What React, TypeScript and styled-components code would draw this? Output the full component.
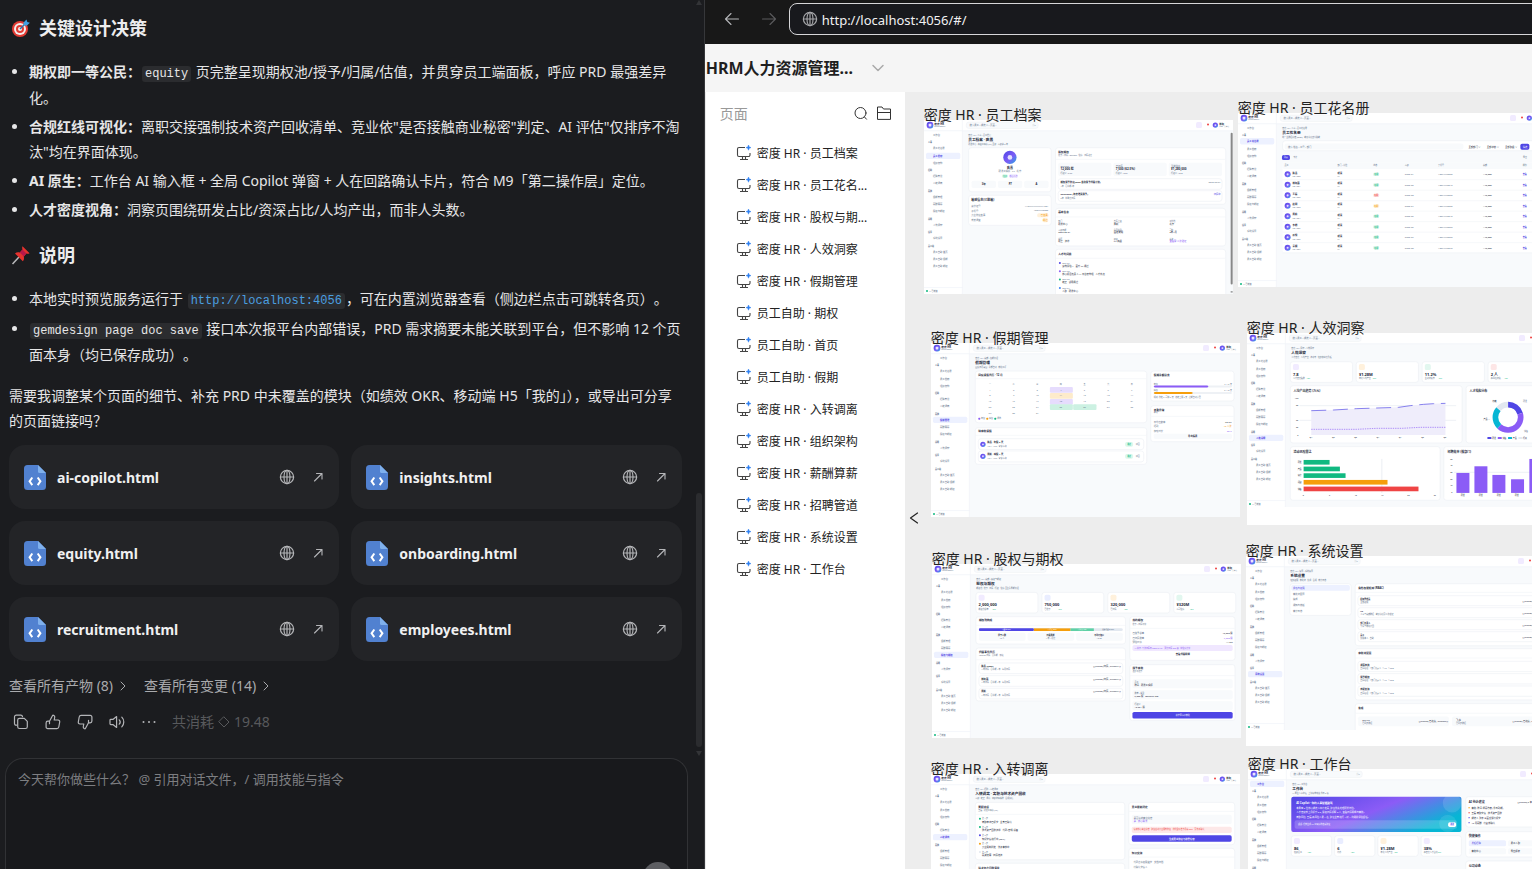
import React from "react";
import styled, { createGlobalStyle } from "styled-components";

const sans = `"Noto Sans", "Noto Sans CJK SC", sans-serif`;
const mono = `"Liberation Mono", "Noto Sans CJK SC", monospace`;

const GlobalStyle = createGlobalStyle`
  *, *::before, *::after { box-sizing: border-box; }
  body { margin: 0; overflow: hidden; background: #1b1c1f; font-family: ${sans}; }
  button, textarea, input { font-family: inherit; margin: 0; }
`;

/* ---------- page frame ---------- */

const Workspace = styled.div`
  display: grid;
  grid-template-columns: 46% minmax(0, 1fr);
  height: 100vh;
  overflow: hidden;
`;

const ChatPanel = styled.section`
  position: relative;
  display: flex;
  flex-direction: column;
  min-width: 0;
  min-height: 0;
  background: #1b1c1f;
  border-right: 1px solid #36373a;
  color: #e6e6e7;
  font-size: 14px;
  line-height: 25px;
`;

const Conversation = styled.div`
  flex: 1;
  min-height: 0;
  overflow: hidden;
  padding: 11px 22px 0 9px;
`;

const SectionTitle = styled.h3`
  display: flex;
  align-items: center;
  gap: 8px;
  margin: 0;
  padding: 3px 0 0 2px;
  font-size: 18px;
  line-height: 28px;
  font-weight: 700;
  color: #ededee;
`;

const Bullets = styled.ul`
  display: flex;
  flex-direction: column;
  gap: 4px;
  margin: 17px 0 16px;
  padding: 0 0 0 20px;
  text-spacing-trim: space-all;
  li::marker { font-size: 14px; }
`;

const Code = styled.code`
  margin: 0 1px;
  padding: 1px 3px;
  border-radius: 3px;
  background: #2b2c2f;
  font-family: ${mono};
  font-size: 12px;
  line-height: 21px;
`;

const CodeLink = styled.a`
  color: #4a9fe0;
  text-decoration: none;
`;

const Paragraph = styled.p`
  margin: 0 0 12px;
`;

const FileGrid = styled.div`
  display: grid;
  grid-template-columns: repeat(2, minmax(0, 1fr));
  gap: 12px;
`;

const FileCard = styled.div`
  display: flex;
  align-items: center;
  height: 64px;
  padding: 0 12px 0 15px;
  border-radius: 16px;
  background: #232427;
`;

const FileName = styled.span`
  flex: 1;
  margin-left: 11px;
  font-size: 14px;
  font-weight: 700;
  color: #f0f0f1;
`;

const IconButton = styled.button<{ $tone?: string }>`
  display: flex;
  align-items: center;
  justify-content: center;
  width: 18px;
  height: 18px;
  padding: 0;
  border: 0;
  background: none;
  color: ${(p) => p.$tone ?? "#b4b5b8"};
  cursor: pointer;
`;

const CardActions = styled.div`
  display: flex;
  gap: 13px;
`;

const LinkRow = styled.div`
  display: flex;
  gap: 15px;
  margin-top: 12px;
`;

const MoreButton = styled.button`
  display: flex;
  align-items: center;
  gap: 4px;
  padding: 0;
  border: 0;
  background: none;
  color: #a9aaad;
  font-size: 14px;
  line-height: 25px;
  cursor: pointer;
`;

const FeedbackRow = styled.div`
  display: flex;
  align-items: center;
  gap: 14px;
  margin-top: 11px;
  padding-left: 3px;
`;

const Cost = styled.span`
  display: flex;
  align-items: center;
  gap: 4px;
  color: #58595c;
`;

const Composer = styled.form`
  display: flex;
  flex-direction: column;
  flex: 0 0 111px;
  margin: 0 16px 0 5px;
  overflow: hidden;
  border: 1px solid #313235;
  border-bottom: 0;
  border-radius: 18px 18px 0 0;
  background: #18191c;
`;

const Prompt = styled.textarea`
  flex: 0 0 103px;
  padding: 10px 12px;
  border: 0;
  outline: 0;
  resize: none;
  background: none;
  color: #e6e6e7;
  font-size: 13px;
  line-height: 20px;
  &::placeholder { color: #7d7e81; opacity: 1; }
`;

const SendButton = styled.button`
  flex: 0 0 30px;
  align-self: flex-end;
  width: 30px;
  margin-right: 14px;
  border: 0;
  border-radius: 15px;
  background: #5d5e62;
`;

const ScrollRail = styled.div`
  position: absolute;
  right: 2px;
  top: 0;
  bottom: 111px;
  display: flex;
  flex-direction: column;
  align-items: center;
  padding-bottom: 2px;
  color: #333437;
`;

const ScrollThumb = styled.div`
  width: 6px;
  height: 254px;
  margin-top: auto;
  margin-bottom: 4px;
  border-radius: 3px;
  background: #2b2c2f;
`;

/* ---------- browser side ---------- */

const Browser = styled.section`
  display: flex;
  flex-direction: column;
  min-width: 0;
  min-height: 0;
  background: #f5f5f5;
  overflow: hidden;
`;

const AddressBar = styled.div`
  display: flex;
  align-items: center;
  flex: 0 0 44px;
  gap: 19px;
  padding: 0 0 6px 18px;
  background: #181818;
`;

const AddressBox = styled.label`
  display: flex;
  flex: 1;
  align-items: center;
  gap: 4px;
  height: 32px;
  margin: 0 -12px 0 -8px;
  padding-left: 12px;
  border: 1px solid #d6d6d8;
  border-radius: 8px;
  background: #18191d;
  color: #a5a6a9;
`;

const AddressInput = styled.input`
  flex: 1;
  min-width: 0;
  padding: 1px 0 0;
  border: 0;
  outline: 0;
  background: none;
  color: #f1f1f2;
  font-size: 13px;
  line-height: 20px;
`;

const ProjectBar = styled.header`
  display: flex;
  align-items: center;
  gap: 16px;
  flex: 0 0 48px;
  padding-left: 1px;
  color: #1f1f1f;
`;

const ProjectName = styled.h1`
  margin: 0;
  font-size: 16px;
  line-height: 24px;
  font-weight: 700;
`;

const Designer = styled.div`
  display: flex;
  flex: 1;
  min-height: 0;
`;

const PageList = styled.nav`
  flex: 0 0 200px;
  border-left: 1px solid #e9e9e9;
  background: #fff;
`;

const PageListHead = styled.div`
  display: flex;
  align-items: center;
  gap: 5px;
  height: 45px;
  padding: 0 12px 4px 14px;
  color: #999;
  font-size: 14px;
  span { flex: 1; }
`;

const PageLink = styled.a`
  display: flex;
  align-items: center;
  gap: 5px;
  height: 32px;
  padding-left: 30px;
  color: #222;
  font-size: 12px;
  text-decoration: none;
  white-space: nowrap;
`;

const Canvas = styled.main`
  position: relative;
  flex: 1;
  min-width: 0;
  overflow: hidden;
  background: #ededed;
`;

const SharedPaints = styled.svg`
  position: absolute;
  width: 0;
  height: 0;
`;

const CollapseButton = styled.button`
  position: absolute;
  left: 3px;
  top: 417px;
  display: flex;
  padding: 3px 0;
  border: 0;
  background: none;
  color: #222;
`;

const Artboard = styled.figure<{ $x: number; $y: number; $h: number }>`
  position: absolute;
  left: ${(p) => p.$x}px;
  top: ${(p) => p.$y}px;
  width: 309px;
  height: ${(p) => p.$h}px;
  margin: 0;
  background: #fff;
  svg { display: block; width: 309px; height: 174px; }
`;

const ArtboardTitle = styled.figcaption`
  position: absolute;
  left: 0;
  bottom: 100%;
  margin-bottom: -5px;
  color: #222;
  font-size: 14px;
  line-height: 20px;
  white-space: nowrap;
`;

/* ---------- icons ---------- */

type IconProps = { size?: number; children: React.ReactNode; box?: number; w?: number };
const Line = ({ size = 16, box = 16, w = 1, children }: IconProps) => (
  <svg width={size} height={size} viewBox={`0 0 ${box} ${box}`} fill="none" stroke="currentColor"
    strokeWidth={w} strokeLinecap="round" strokeLinejoin="round" aria-hidden="true">{children}</svg>
);

const Globe = ({ size = 16 }: { size?: number }) => (
  <Line size={size} w={1.2}>
    <circle cx="8" cy="8" r="6.6" /><ellipse cx="8" cy="8" rx="3" ry="6.6" />
    <path d="M1.4 8h13.2M8 1.4v13.2" />
  </Line>
);
const OpenArrow = () => <Line w={1.1}><path d="M4.500 12 12 4.500M6.500 4.500H12V10" /></Line>;
const Chevron = () => <Line size={12} box={12}><path d="m4 2 4 4-4 4" /></Line>;
const Copy = () => (
  <Line w={1.2}><path d="M3.500 11.200h-.4a1.600 1.600 0 0 1-1.600-1.600V3A1.800 1.800 0 0 1 3.300 1.200h4.500a1.800 1.800 0 0 1 1.700 1.500" />
    <path d="M6.500 4.300h4.800l3 3v5.400a1.800 1.800 0 0 1-1.800 1.800h-6a1.800 1.800 0 0 1-1.800-1.800V6.100a1.800 1.800 0 0 1 1.800-1.800z" /></Line>
);
const thumb = "M4.500 7.200 7.600 1.500c.3-.5 2.500-.1 2.100 2L9.200 6h3.900c1.100 0 1.800.9 1.600 2l-.9 5c-.2 1-.9 1.600-1.900 1.600H2.800c-1 0-1.700-.7-1.700-1.700V8.900c0-1 .7-1.700 1.700-1.700zM4.500 7.200v2.500";
const ThumbUp = () => <Line w={1.2}><path d={thumb} /></Line>;
const ThumbDown = () => <Line w={1.2}><g transform="rotate(180 8 8)"><path d={thumb} /></g></Line>;
const Speaker = () => (
  <Line w={1.2}><path d="M1 6.200a.8.800 0 0 1 .8-.8h2.100L7.600 2.600v10.800L3.900 10.600H1.800a.8.800 0 0 1-.8-.8zM10.200 5.800a3.200 3.200 0 0 1 0 4.400M12.800 3.200a6.800 6.800 0 0 1 0 9.600" /></Line>
);
const Dots = () => (
  <Line><g fill="currentColor" stroke="none"><circle cx="2.500" cy="8" r="1" /><circle cx="8" cy="8" r="1" /><circle cx="13.500" cy="8" r="1" /></g></Line>
);
const FileIcon = () => (
  <svg width="22" height="25" viewBox="0 0 22 25" aria-hidden="true">
    <path d="M3.500 0H14l8 8v13.500a3.500 3.500 0 0 1-3.500 3.500h-15A3.500 3.500 0 0 1 0 21.500v-18A3.500 3.500 0 0 1 3.500 0z" fill="#5181d0" />
    <path d="M14 0l8 8h-6.500A1.500 1.500 0 0 1 14 6.500z" fill="#7fb0ec" />
    <path d="M8.300 12.500 5.600 16.300l2.700 3.800M13.700 12.500l2.700 3.800-2.700 3.800" fill="none" stroke="#fff" strokeWidth="2" />
  </svg>
);
const Target = () => (
  <svg width="20" height="20" viewBox="0 0 20 20" aria-hidden="true">
    <circle cx="9" cy="11" r="8" fill="#e33b33" /><circle cx="9" cy="11" r="6" fill="#f4eeee" />
    <circle cx="9" cy="11" r="4" fill="#e33b33" /><circle cx="9" cy="11" r="2" fill="#f4eeee" />
    <path d="M9 11l5-5" stroke="#2c6fa5" strokeWidth="1.500" />
    <path d="M12.500 7.500V4.500L15.500 1.500l.8 2.400 2.600.8-3 2.900z" fill="#3f9fe0" />
  </svg>
);
const Pin = () => (
  <svg width="20" height="20" viewBox="0 0 20 20" aria-hidden="true">
    <path d="M1.500 19 8 12" stroke="#b9b9bb" strokeWidth="1.500" />
    <path d="M11.500 1.200 18.600 8.200c-1.200.8-2.300.7-3.200.3l-2.600 3c.5 2 .2 3.600-1 4.800L4 8.500c1.300-1.200 2.900-1.500 4.800-1L11.500 4.400c-.5-1-.5-2.200 0-3.200z" fill="#e5322e" />
    <path d="M8.800 7.500 11.500 4.400l3.900 4.100-2.600 3z" fill="#b8184a" />
  </svg>
);
const PageIcon = () => (
  <svg width="16" height="16" viewBox="0 0 16 16" fill="none" aria-hidden="true">
    <path d="M9 2.500H3A1.500 1.500 0 0 0 1.500 4v6A1.500 1.500 0 0 0 3 11.500h9.500A1.500 1.500 0 0 0 14 10V8M6.500 11.500v3M9.500 11.500v3M4 14.500h8" stroke="#444" strokeWidth="1.100" />
    <path d="M12.500 0l.7 1.900 1.800.7-1.800.7-.7 1.900-.7-1.900-1.800-.7 1.800-.7z" fill="#2d7ff0" stroke="#2d7ff0" strokeWidth=".5" />
  </svg>
);

/* ---------- miniature pages shown on the artboards ---------- */

const INK = "#1e293b";
const GREY = "#64748b";
const BLUE = "#4f46e5";
const VIOLET = "#8b5cf6";
const GREEN = "#10b981";
const AMBER = "#f59e0b";
const RED = "#ef4444";

type TProps = { x: number; y: number; s?: number; c?: string; b?: boolean; end?: boolean; mid?: boolean; children: React.ReactNode };
const T = ({ x, y, s = 7, c = GREY, b, end, mid, children }: TProps) => (
  <text x={x} y={y + s * 0.36} fontSize={s} fill={c} fontWeight={b ? 700 : 400}
    textAnchor={end ? "end" : mid ? "middle" : "start"}>{children}</text>
);
type RProps = { x: number; y: number; w: number; h: number; f?: string; r?: number };
const Card = ({ x, y, w, h }: RProps) => <rect x={x} y={y} width={w} height={h} rx="8" fill="#fff" stroke="#edf0f5" strokeWidth="2" />;
const Box = ({ x, y, w, h, f = "#f8fafc", r = 5 }: RProps) => <rect x={x} y={y} width={w} height={h} rx={r} fill={f} />;
const Avatar = ({ x, y, r }: { x: number; y: number; r: number }) => (
  <g><circle cx={x} cy={y} r={r} fill="url(#brand)" /><circle cx={x} cy={y} r={r * 0.35} fill="#fff" opacity=".8" /></g>
);
const Rule = ({ x, y, w }: { x: number; y: number; w: number }) => <path d={`M${x} ${y}h${w}`} stroke="#f1f4f8" strokeWidth="2" />;

const menu: [string, number, boolean][] = [
  ["工作台", 45, true], ["人事", 67, false], ["员工花名册", 85, true], ["员工档案", 108, true], ["组织架构", 129, true],
  ["招聘", 150, false], ["招聘管道", 168, true], ["入转调离", 190, true], ["薪酬", 213, false], ["假期管理", 231, true],
  ["薪酬算薪", 252, true], ["股权与期权", 273, true], ["洞察", 297, false], ["人效洞察", 315, true], ["设置", 336, false],
  ["系统设置", 355, true], ["员工端", 378, false], ["员工自助·首页", 396, true], ["员工自助·假期", 417, true], ["员工自助·期权", 438, true],
];

type ShellProps = { active: string; title: string; crumb: string; sub: string; children: React.ReactNode };
const Mini = ({ active, title, crumb, sub, children }: ShellProps) => (
  <svg viewBox="0 0 928 522" role="img" aria-label={title}>
    <rect width="928" height="522" fill="#f8fafc" />
    <rect width="928" height="32" fill="#fff" /><rect width="115" height="522" fill="#fff" />
    <path d="M0 32h928M115 0v522M0 503h115" stroke="#eff2f7" strokeWidth="2" />
    <rect x="8" y="5" width="20" height="20" rx="9" fill="url(#brand)" /><rect x="14" y="11" width="8" height="8" rx="2" fill="#e9e5ff" />
    <T x={31} y={11} s={8} c={INK} b>密度 HR</T><T x={31} y={19} s={5}>Talent Density</T>
    <rect x="127" y="6" width="216" height="19" rx="7" fill="#f8fafc" stroke="#e6eaf1" />
    <T x={137} y={16}>搜索员工 / 候选人 / 页面…</T><T x={326} y={16} s={6}>⌘K</T>
    <Box x={817} y={6} w={18} h={18} f="#f1ebff" /><circle cx="853" cy="13" r="3" fill={RED} />
    <Avatar x={875} y={15} r={8} /><T x={887} y={11} c={INK} b>林晓</T><T x={887} y={19} s={5}>HRD · 管理员</T>
    {menu.map(([label, y, item]) => (
      <g key={label}>
        {label === active && <Box x={6} y={y - 10} w={103} h={19} f="#edf1ff" />}
        <T x={item ? 27 : 12} y={y} s={item ? 7 : 6} b={label === active || !item} c={label === active ? BLUE : GREY}>{label}</T>
      </g>
    ))}
    <circle cx="9" cy="513" r="3" fill={GREEN} /><T x={15} y={513} s={6}>AI 已就绪</T>
    <T x={133} y={46} s={6}>{crumb}</T><T x={133} y={59} s={11} c={INK} b>{title}</T><T x={133} y={73} s={6}>{sub}</T>
    {children}
  </svg>
);

const Profile = () => (
  <Mini active="员工档案" title="员工档案 · 陈墨" crumb="密度 HR / 人事 / 员工档案" sub="研发中心 · 高级工程师 (P7) 全职 · 入职满 3 年">
    <Card x={134} y={83} w={248} h={132} /><Avatar x={258} y={112} r={20} />
    <T x={258} y={144} s={9} c={INK} b mid>陈墨</T><T x={258} y={153} mid>研发工程师 · P7 · 北京</T>
    <Box x={234} y={163} w={18} h={11} f="#dcf8ec" /><Box x={256} y={163} w={26} h={11} f="#eee8ff" />
    <T x={243} y={169} s={6} c={GREEN} mid>在职</T><T x={269} y={169} s={6} c={VIOLET} mid>核心人才</T>
    {["3年", "P7", "A"].map((v, i) => <g key={v}><Box x={143 + i * 79} y={182} w={73} h={22} /><T x={180 + i * 79} y={192} s={8} c={INK} mid b>{v}</T></g>)}
    <Card x={134} y={226} w={248} h={90} /><T x={142} y={240} s={9} c={INK} b>敏感信息(已脱敏)</T>
    {["身份证号", "手机号", "竞业协议签署", "背景调查"].map((v, i) => <T key={v} x={142} y={258 + i * 14}>{v}</T>)}
    <T x={373} y={257} end>110***********1234</T><T x={373} y={271} end>138****8888</T>
    <Box x={340} y={280} w={34} h={12} f="#fff0da" /><T x={372} y={286} s={7} c={AMBER} end>已签署</T>
    <Box x={356} y={295} w={17} h={12} f="#fff0da" /><T x={371} y={301} c={AMBER} end>通过</T>
    <Card x={395} y={83} w={511} h={170} /><T x={403} y={97} s={8} c={INK} b>股权期权</T><T x={403} y={106} s={6}>授予 / 归属 / Options · 估值 · 归属进度</T><Rule x={396} y={118} w={509} />
    {[["Options", "12,000 股"], ["已归属", "7,500 (62.5%)"], ["当前估值", "¥1,280,000"]].map(([a, v], i) => (
      <g key={a}><Box x={403 + i * 166} y={128} w={160} h={40} /><T x={410 + i * 166} y={138}>{a}</T><T x={410 + i * 166} y={147} s={9} c={INK} b>{v}</T><T x={410 + i * 166} y={159} s={6}>行权价 ¥3.20</T></g>
    ))}
    <Card x={403} y={176} w={492} h={32} /><T x={410} y={187} c={INK} b>期权授予协议(2022 首次授予归属计划)</T><T x={410} y={198} s={6}>4年 · 悬崖期1年</T><T x={891} y={187} end>2022-03-01</T>
    <Card x={403} y={212} w={492} h={32} /><T x={410} y={223} c={INK} b>Refresher (年度增发授予)</T><T x={410} y={235} s={6}>2年 · 按季度归属</T><T x={891} y={223} end c={BLUE}>归属中</T>
    <Card x={395} y={265} w={511} h={113} /><T x={403} y={277} s={8} c={INK} b>基本信息</T><Rule x={396} y={291} w={509} />
    {["部门", "直属上级", "工作地", "入职日期", "合同类型", "司龄", "学历", "职级", "薪资"].map((v, i) => (
      <g key={v}><T x={403 + (i % 3) * 167} y={303 + Math.floor(i / 3) * 27} s={6}>{v}</T><T x={403 + (i % 3) * 167} y={312 + Math.floor(i / 3) * 26} c={i === 8 ? VIOLET : INK}>{["研发中心", "周航", "北京", "2022-03-01", "固定期限", "3年4月", "硕士 · 清华", "P7 高级", "查看需 二次验证"][i]}</T></g>
    ))}
    <Card x={395} y={388} w={511} h={150} /><T x={403} y={402} s={8} c={INK} b>人才时间线</T><Rule x={396} y={415} w={509} />
    {["绩效评估 A · 晋升 P7 通过", "核心项目负责人 AI 平台架构组 · 人才盘点", "转正 · 试用通过", "入职 · 研发中心"].map((v, i) => (
      <g key={v}><Box x={405} y={426 + i * 25} w={6} h={6} r={3} f={[BLUE, VIOLET, GREEN, "#3b82f6"][i]} /><T x={415} y={429 + i * 25} s={6}>2024-0{7 - i}</T><T x={415} y={438 + i * 25} c={INK}>{v}</T></g>
    ))}
    <rect x="921" y="38" width="6" height="456" rx="3" fill="#888" /><path d="M921 516h6" stroke="#666" strokeWidth="3" />
  </Mini>
);

const people = ["陈墨", "林晓薇", "王磊", "赵明", "周航", "李想", "孙悦", "吴桐"];
const Roster = () => (
  <Mini active="员工花名册" title="员工花名册" crumb="密度 HR / 人事 / 员工花名册" sub="统一主数据底座 (SSOT) · 敏感字段默认脱敏">
    <Card x={134} y={83} w={800} h={30} /><Box x={140} y={91} w={537} h={18} /><T x={150} y={101}>搜索 姓名 / 工号 / 部门</T>
    {["全部部门 ∨", "全部状态 ∨", "全部职级 ∨"].map((v, i) => <T key={v} x={692 + i * 55} y={101} c={INK}>{v}</T>)}
    <Box x={848} y={92} w={27} h={18} f={BLUE} /><T x={862} y={101} c="#fff" mid>筛选</T>
    <Box x={132} y={126} w={24} h={15} f={BLUE} /><T x={144} y={134} s={6} c="#fff" mid>列表</T><T x={166} y={134} s={6}>卡片</T><T x={856} y={134} s={6}>导出</T>
    <Box x={134} y={148} w={800} h={270} f="#fff" /><Box x={134} y={148} w={800} h={20} />
    {["员工", "部门 / 岗位", "状态", "入职", "手机号", "薪酬", "操作"].map((v, i) => <T key={v} x={[140, 299, 406, 501, 601, 736, 855][i]} y={158} s={6}>{v}</T>)}
    {people.map((v, i) => {
      const y = 184 + i * 31.5;
      const tone = i === 2 ? RED : i === 3 ? AMBER : GREEN;
      return <g key={v}><Avatar x={149} y={y} r={9} /><T x={164} y={y - 5} c={INK} b>{v}</T><T x={164} y={y + 5} s={6}>TD-100{i}</T>
        <T x={299} y={y - 4} c={INK} b>研发</T><T x={299} y={y + 5} s={5}>P7</T>
        <rect x="406" y={y - 5} width="18" height="10" rx="4" fill={tone} opacity=".15" /><T x={415} y={y} s={6} c={tone} b mid>在职</T>
        <T x={501} y={y}>2023-0{i + 1}</T><T x={601} y={y}>138****88{i}6</T><T x={736} y={y} c={INK}>¥42,000</T><T x={855} y={y} s={6} c={BLUE} b>查看</T><Rule x={134} y={y + 16} w={800} /></g>;
    })}
  </Mini>
);

const Leave = () => (
  <Mini active="假期管理" title="假期管理" crumb="密度 HR / 薪酬 / 假期管理" sub="团队日历视图 · 余额自动 · 审批闭环">
    <Card x={133} y={84} w={515} h={155} /><T x={142} y={95} s={8} c={INK} b>团队请假日历 · 12 月</T><Rule x={134} y={107} w={513} />
    {[0, 1].map((i) => <Box key={i} x={357} y={132 + i * 36} w={69} h={17} f="#e6dcfd" r={3} />)}
    <Box x={357} y={150} w={69} h={17} f="#fdebcb" r={3} /><Box x={357} y={184} w={69} h={17} f="#ccf1e2" r={3} /><Box x={427} y={184} w={70} h={17} f="#ccf1e2" r={3} />
    {["一", "二", "三", "四", "五", "六", "日"].map((v, i) => <T key={v} x={177 + i * 71} y={124} s={6} mid>{v}</T>)}
    {Array.from({ length: 31 }, (_, i) => <T key={i} x={177 + (i % 7) * 71} y={140 + Math.floor(i / 7) * 17.5} mid>{i + 1}</T>)}
    {["年假", "病假", "调休"].map((v, i) => <g key={v}><Box x={142 + i * 24} y={224} w={6} h={6} r={2} f={[VIOLET, AMBER, GREEN][i]} /><T x={150 + i * 24} y={227} s={6}>{v}</T></g>)}
    <Card x={133} y={254} w={515} h={110} /><T x={142} y={265} s={8} c={INK} b>待审批请假</T><Rule x={134} y={277} w={513} />
    {["陈墨 · 年假 2 天", "周航 · 病假 1 天"].map((v, i) => <g key={v}><Card x={142} y={287 + i * 37} w={497} h={33} /><Avatar x={156} y={304 + i * 36} r={8} /><T x={169} y={299 + i * 36} c={INK} b>{v}</T><T x={169} y={309 + i * 36} s={6}>12/4 - 12/5 · 家庭事务</T>
      <Box x={583} y={297 + i * 36} w={24} h={14} f="#dcf8ec" /><T x={595} y={304 + i * 36} s={6} c={GREEN} b mid>通过</T><T x={621} y={304 + i * 36} s={6} mid>驳回</T></g>)}
    <Card x={660} y={84} w={250} h={90} /><T x={669} y={95} s={8} c={INK} b>假期余额总览</T>
    <T x={669} y={123} s={6}>年假</T><T x={904} y={123} s={6} end>9 / 15 天</T><Box x={669} y={127} w={235} h={6} f="#eef1f5" /><Box x={669} y={127} w={164} h={6} f={VIOLET} />
    <T x={669} y={143} s={6}>病假</T><T x={904} y={143} s={6} end>5 / 10 天</T><Box x={669} y={147} w={235} h={6} f="#eef1f5" /><Box x={669} y={147} w={117} h={6} f={AMBER} />
    <T x={669} y={162} s={6}>规则: 法定 5+司龄 2 天 · 结转上限 5 天 · 过期自动清零</T>
    <Card x={660} y={188} w={250} h={108} /><T x={669} y={200} s={8} c={INK} b>考勤异常</T><T x={669} y={209} s={6}>本月</T><Rule x={661} y={220} w={248} />
    {["平均出勤率", "迟到", "加班时长"].map((v, i) => <g key={v}><T x={669} y={236 + i * 14}>{v}</T><T x={903} y={236 + i * 14} c={[INK, AMBER, VIOLET][i]} end>{["98.6%", "12 人次", "86 h"][i]}</T></g>)}
    <Box x={669} y={272} w={235} h={16} /><T x={786} y={280} c={INK} b mid>导出报表</T>
  </Mini>
);

const Stat = ({ x, y, w, v, t, f }: { x: number; y: number; w: number; v: string; t: string; f: string }) => (
  <g><Card x={x} y={y} w={w} h={62} /><Box x={x + 8} y={y + 7} w={18} h={18} f={f} /><T x={x + 8} y={y + 38} s={12} c={INK} b>{v}</T><T x={x + 8} y={y + 50} s={6}>{t}</T><T x={x + 48} y={y + 50} s={6} c={GREEN}>+8%</T></g>
);

const Insights = () => (
  <Mini active="人效洞察" title="人效洞察" crumb="密度 HR / 洞察 / 人效洞察" sub="人才密度 · 人均产出 · 流动率 · 组织健康度看板">
    {[["7.8", "人才密度指数"], ["¥1.28M", "年化人均产出"], ["11.2%", "主动流失率"], ["2 人", "高风险流失"]].map(([v, t], i) => <Stat key={v} x={130 + i * 198} y={86} w={187} v={v} t={t} f={["#f1ebff", "#fff1dc", "#e2f7ef", "#fde6e6"][i]} />)}
    <Card x={130} y={158} w={516} h={172} /><T x={140} y={174} s={9} c={INK} b>人均产出趋势 (万元)</T>
    {[218, 262].map((y) => <path key={y} d={`M158 ${y}h470`} stroke="#e6eaf0" strokeWidth="2" />)}
    <path d="M193 233 260 231 328 227 390 225 455 223 490 218 530 214 560 212 596 211V306H193z" fill="#efedfb" />
    <path d="M193 233 260 231 328 227 390 225 455 223 490 218 530 214 560 212 596 211" fill="none" stroke={BLUE} strokeWidth="2" strokeDasharray="45 20" />
    <path d="M193 289 328 289 390 286 465 286 520 283 598 283" fill="none" stroke={VIOLET} strokeWidth="2" strokeDasharray="4 3" />
    {["120", "80", "60", "30", "0"].map((v, i) => <T key={v} x={154} y={[197, 218, 262, 284, 307][i]} s={6} end c={INK}>{v}</T>)}
    {["Q1", "Q2", "Q3", "Q4", "Q1", "Q2", "Q3"].map((v, i) => <T key={i} x={192 + i * 67} y={312} s={6} mid c={INK}>{v}</T>)}
    <Card x={658} y={158} w={262} h={172} /><T x={668} y={174} s={9} c={INK} b>人才结构分布</T>
    <g fill="none" strokeWidth="17" transform="translate(784 253) rotate(-90)">
      {[[0, 20, BLUE], [20, 42, VIOLET], [62, 24, "#06b6d4"], [86, 14, "#e2e8f0"]].map(([o, n, c]) => <circle key={c} r="38" pathLength={100} stroke={String(c)} strokeDasharray={`${n} 100`} strokeDashoffset={-Number(o)} />)}
    </g>
    <T x={743} y={204} s={6} c={INK} b mid>行政</T><T x={829} y={206} s={6}>研发</T><T x={710} y={260} s={6} c={INK}>产品 —</T><T x={832} y={295} s={6}>销售</T>
    {["研发", "销售", "产品", "行政"].map((v, i) => <g key={v}><Box x={722 + i * 31} y={312} w={12} h={6} r={1} f={[BLUE, VIOLET, "#06b6d4", "#e2e8f0"][i]} /><T x={736 + i * 31} y={315} s={6} c={INK}>{v}</T></g>)}
    <Card x={130} y={341} w={450} h={161} /><T x={140} y={357} s={9} c={INK} b>流动风险雷达</T>
    <path d="M405 378v102" stroke="#dfe5ec" strokeWidth="2" />
    {[78, 109, 126, 252, 345].map((w, i) => <g key={w}><rect x="170" y={381 + i * 20} width={w} height="14" fill={[GREEN, GREEN, GREEN, AMBER, RED][i]} /><T x={164} y={388 + i * 20} s={6} end c={INK}>{["研发", "产品", "设计", "运营", "销售"][i]}</T></g>)}
    {[0, 5, 10, 15, 20, 25].map((v, i) => <T key={v} x={169 + i * 79} y={486} s={6} mid c={INK}>{v}</T>)}
    <Card x={591} y={341} w={360} h={161} /><T x={602} y={357} s={9} c={INK} b>招聘效率 (按部门)</T><path d="M622 418h300" stroke="#e6eaf0" strokeWidth="2" />
    {[60, 80, 54, 41, 102].map((h, i) => <g key={h}><rect x={[629, 683, 737, 793, 848][i]} y={480 - h} width="39" height={h} fill={VIOLET} /><T x={648 + i * 54} y={487} s={6} mid c={INK}>研发</T></g>)}
    {[50, 40, 30, 20, 10, 0].map((v, i) => <T key={v} x={617} y={378 + i * 20} s={6} end c={INK}>{v}</T>)}
  </Mini>
);

const Equity = () => (
  <Mini active="股权与期权" title="股权与期权" crumb="密度 HR / 薪酬 / 股权与期权" sub="期权池 · 授予 · 归属 · 行权 · 估值 全生命周期管理">
    {[["2,000,000", "期权池总量"], ["750,000", "已授予"], ["320,000", "已归属"], ["¥320M", "公司估值"]].map(([v, t], i) => <Stat key={v} x={132 + i * 198} y={85} w={186} v={v} t={t} f={["#f1ebff", "#e9edff", "#fff1dc", "#e2f7ef"][i]} />)}
    <Card x={132} y={158} w={449} h={82} /><T x={141} y={169} s={8} c={INK} b>期权池构成</T><Rule x={133} y={184} w={447} />
    <Box x={141} y={193} w={432} h={8} f="#e2e8f0" /><Box x={141} y={193} w={165} h={8} f={BLUE} r={3} /><Box x={306} y={193} w={110} h={8} f={AMBER} r={0} /><Box x={416} y={193} w={70} h={8} f="#5ed0a6" r={0} />
    <T x={223} y={197} s={5} c="#fff" mid>已授予 38%</T><T x={361} y={197} s={5} c="#fff" mid>已归属 26%</T><T x={451} y={197} s={5} c="#fff" mid>已行权 16%</T><T x={529} y={197} s={5} mid>剩余可授予 20%</T>
    {["授予人数", "归属周期", "平均行权价"].map((v, i) => <g key={v}><Box x={141 + i * 146} y={206} w={140} h={24} /><T x={210 + i * 146} y={214} s={6} c={INK} b mid>{v}</T><T x={210 + i * 146} y={223} s={6} mid>{["42 人", "4 年 / 月度", "¥3.20"][i]}</T></g>)}
    <Card x={132} y={252} w={449} h={159} /><T x={141} y={264} s={8} c={INK} b>归属事件日历</T><T x={141} y={274} s={6}>Vesting 归属 · 悬崖期 · 加速</T><Rule x={133} y={287} w={447} />
    {["陈墨 (2022)", "林晓薇", "周航"].map((v, i) => <g key={v}><Card x={141} y={297 + i * 38} w={432} h={32} /><T x={148} y={307 + i * 38} c={INK} b>{v}</T><T x={148} y={317 + i * 38} s={6}>4 年归属 · 悬崖期 1 年 · 每月归属</T><T x={567} y={307 + i * 38} s={7} c={INK} end>{"${badge('归属','primary')}"}</T></g>)}
    <Card x={594} y={158} w={316} h={131} /><T x={602} y={169} s={8} c={INK} b>我的期权</T><T x={602} y={180} s={6}>授予 / 归属测算</T><Rule x={595} y={193} w={314} />
    {["已授予总量", "已归属数量", "预估价值"].map((v, i) => <g key={v}><T x={602} y={207 + i * 14}>{v}</T><T x={903} y={207 + i * 14} c={i === 1 ? VIOLET : INK} end>{["12,000 股", "7,500 股", "¥1.2M"][i]}</T></g>)}
    <Box x={602} y={243} w={301} h={18} f="#f0e7ff" /><T x={608} y={252} s={6} c={VIOLET}>AI 提示: 下次归属日 2025-01-01 · 预计归属 250 股 · 按估值计算</T><T x={753} y={271} c={INK} b mid>查看归属明细</T>
    <Card x={594} y={302} w={316} h={168} /><T x={602} y={313} s={8} c={INK} b>授予审批</T><T x={602} y={323} s={6}>发起新授予</T><Rule x={595} y={335} w={314} />
    {["员工", "数量 / 类型", "行权价"].map((v, i) => <g key={v}><Box x={602} y={346 + i * 33} w={301} h={27} /><T x={608} y={354 + i * 33} s={6}>{v}</T><T x={608} y={364 + i * 33} c={INK}>{["陈墨 · 研发工程师", "5,000 股 · Options ISO", "¥3.20 / 股"][i]}</T></g>)}
    <Box x={602} y={444} w={301} h={20} f={BLUE} /><T x={753} y={454} s={6} c="#fff" mid>提交董事会审批</T>
  </Mini>
);

const Settings = () => (
  <Mini active="系统设置" title="系统设置" crumb="密度 HR / 设置 / 系统设置" sub="组织权限 · 审批流 · 集成 · 合规 · 审计日志">
    <Card x={132} y={83} w={184} h={95} /><Box x={136} y={87} w={176} h={17} f="#edf1ff" />
    {["角色与权限", "审批流配置", "集成", "通知与模板", "审计日志"].map((v, i) => <T key={v} x={141} y={96 + i * 17} c={i ? GREY : BLUE}>{v}</T>)}
    <Card x={328} y={83} w={620} h={186} /><T x={337} y={96} s={8} c={INK} b>角色权限矩阵 (RBAC)</T><Rule x={329} y={109} w={600} />
    {["超级管理员", "HR", "部门负责人", "员工"].map((v, i) => <g key={v}><Card x={336} y={119 + i * 36} w={600} h={30} /><T x={343} y={130 + i * 36} s={6} c={INK} b>{v}</T><T x={343} y={138 + i * 36} s={6}>{["全部权限", "人事与薪酬数据 · 敏感字段需二次验证", "下属与审批范围", "仅限本人 · 自助"][i]}</T><T x={912} y={136 + i * 36} c={INK} end>{"${badge('启用','success')}"}</T></g>)}
    <Card x={328} y={278} w={620} h={154} /><T x={337} y={291} s={8} c={INK} b>审批流配置</T><Rule x={329} y={306} w={600} />
    {["调薪审批", "授予期权", "离职交接"].map((v, i) => <g key={v}><Card x={336} y={316 + i * 37} w={600} h={31} /><T x={343} y={328 + i * 36} c={INK} b>{v}</T><T x={343} y={337 + i * 37} s={6}>直属经理 → 部门负责人 → HR → CEO</T></g>)}
    <Card x={328} y={443} w={620} h={110} /><T x={337} y={457} s={8} c={INK} b>集成</T><Rule x={329} y={472} w={600} />
    {[0, 1].map((i) => <g key={i}><Box x={337 + i * 282} y={482} w={272} h={29} /><T x={349 + i * 282} y={493} c={INK}>{["GitHub", "飞书"][i]}</T><T x={349 + i * 282} y={501} s={6}>已同步数据</T><T x={607 + i * 282} y={497} c={INK} end>{"${badge('已连接','success')}"}</T></g>)}
  </Mini>
);

const Transfer = () => (
  <Mini active="入转调离" title="入转调离 · 离职与技术资产回收" crumb="密度 HR / 招聘 / 入转调离" sub="入职 · 转正 · 调岗 · 离职流程编排 · 合规留痕">
    <Card x={133} y={85} w={449} h={172} /><T x={142} y={98} s={8} c={INK} b>离职流程</T><T x={142} y={108} s={6}>王磊 · 研发工程师 (P6)</T><Rule x={134} y={121} w={447} />
    {["离职申请已提交 · 主管已确认", "技术资产回收清单 · 代码/密钥/设备", "知识交接进行中 (60%)", "竞业限制判定 · 法务审核中", "薪资结算 · 归属结清"].map((v, i) => <g key={v}><Box x={144} y={131 + i * 25} w={6} h={6} f={[GREEN, GREEN, BLUE, AMBER, "#e2e8f0"][i]} r={3} /><T x={153} y={134 + i * 25} s={6}>第 {i + 1} 步</T><T x={153} y={144 + i * 25} c={INK}>{v}</T></g>)}
    <Card x={133} y={268} w={449} h={90} /><T x={142} y={282} s={8} c={INK} b>技术资产回收清单</T>
    <Card x={594} y={85} w={318} h={127} /><T x={603} y={98} s={8} c={INK} b>竞业限制判定</T><Rule x={595} y={112} w={316} />
    <Box x={603} y={122} w={300} h={28} /><T x={609} y={131}>是否接触商业秘密</T><T x={609} y={140} c={VIOLET}>是 · 核心算法</T>
    <Box x={603} y={158} w={300} h={19} f="#fde8e8" /><T x={609} y={167} s={6} c={RED}>接触核心商业秘密 · 建议启动竞业限制协议 · 补偿金标准为月薪 30% · 需法务确认</T>
    <Box x={603} y={184} w={300} h={19} f={BLUE} /><T x={753} y={194} c="#fff" b mid>生成竞业协议与补偿方案</T>
    <Card x={594} y={223} w={318} h={110} /><T x={603} y={236} s={8} c={INK} b>知识交接</T><Rule x={595} y={249} w={316} /><T x={608} y={263}>代码仓库权限移交 · 文档归档</T><T x={608} y={280}>待确认交接人</T>
  </Mini>
);

const Dashboard = () => (
  <Mini active="工作台" title="工作台" crumb="密度 HR / 工作台" sub="AI 原生人事中枢 · 上午好林晓薇 今日 6 项">
    <rect x="130" y="83" width="511" height="106" rx="6" fill="url(#hero)" /><circle cx="613" cy="102" r="28" fill="#fff" opacity=".12" /><circle cx="600" cy="163" r="26" fill="#fff" opacity=".1" />
    <T x={145} y={101} s={8} c="#fff" b>AI Copilot · 你的人事智能副驾</T>
    <T x={145} y={117} c="#fff">本周有 2 位核心候选人等待定薪, 建议优先处理研发岗位。</T><T x={145} y={129} c="#fff">人才密度较上月提升 0.3, 股权归属提醒 3 人, 查看归属明细与审批。</T>
    <T x={145} y={143} c="#fff">离职风险: 王磊 高风险人员 1 名, 建议主管进行 1 对 1 沟通并评估留任。</T>
    <rect x="140" y="154" width="488" height="25" rx="6" fill="#fff" opacity=".18" /><T x={150} y={167} s={6} c="#fff">试试: 帮我生成 P7 工程师的定薪建议</T><Box x={601} y={160} w={24} h={14} f="#fff" /><T x={613} y={167} s={6} c={BLUE} b mid>发送</T>
    {[["86", "在职员工"], ["6", "待办"], ["¥1.28M", "年化人均产出"], ["38%", "高密度人才占比"]].map(([v, t], i) => <Stat key={v} x={130 + i * 130} y={200} w={121} v={v} t={t} f={["#f1ebff", "#e9edff", "#fff1dc", "#f1ebff"][i]} />)}
    <Card x={654} y={83} w={300} h={91} /><T x={663} y={99} s={9} c={INK} b>AI 待办建议</T><T x={809} y={99} c={INK}>{"${badge('5 条')}"}</T>
    {["审批: 陈墨 调薪方案 (今日到期)", "王磊 离职交接 · 技术资产回收", "候选人 张宇 三面反馈待提交", "12 月薪酬 · 待复核确认"].map((v, i) => <g key={v}><circle cx="664" cy={116 + i * 15} r="2" fill={[AMBER, RED, BLUE, BLUE][i]} /><T x={671} y={116 + i * 15} c={INK}>{v}</T></g>)}
    <Card x={654} y={188} w={300} h={76} /><T x={663} y={202} s={9} c={INK} b>快捷操作</T>
    {["发起招聘", "员工入职", "审批中心", "导出报表"].map((v, i) => <g key={v}><Box x={663 + (i % 2) * 118} y={214 + Math.floor(i / 2) * 24} w={112} h={18} f={i ? "#f8fafc" : "#edf1ff"} /><T x={671 + (i % 2) * 118} y={223 + Math.floor(i / 2) * 24} c={i ? INK : BLUE}>{v}</T></g>)}
    <Card x={654} y={276} w={300} h={80} /><T x={663} y={292} s={9} c={INK} b>公司动态</T>
  </Mini>
);

const files = ["ai-copilot.html", "insights.html", "equity.html", "onboarding.html", "recruitment.html", "employees.html"];
const pages = ["密度 HR · 员工档案", "密度 HR · 员工花名...", "密度 HR · 股权与期...", "密度 HR · 人效洞察", "密度 HR · 假期管理", "员工自助 · 期权", "员工自助 · 首页", "员工自助 · 假期", "密度 HR · 入转调离", "密度 HR · 组织架构", "密度 HR · 薪酬算薪", "密度 HR · 招聘管道", "密度 HR · 系统设置", "密度 HR · 工作台"];
const boards = [
  { name: "员工档案", x: 19, y: 28, h: 174, Page: Profile },
  { name: "员工花名册", x: 333, y: 21, h: 174, Page: Roster },
  { name: "假期管理", x: 26, y: 251, h: 174, Page: Leave },
  { name: "人效洞察", x: 342, y: 241, h: 192, Page: Insights },
  { name: "股权与期权", x: 27, y: 472, h: 174, Page: Equity },
  { name: "系统设置", x: 341, y: 464, h: 190, Page: Settings },
  { name: "入转调离", x: 26, y: 682, h: 174, Page: Transfer },
  { name: "工作台", x: 343, y: 677, h: 174, Page: Dashboard },
];

export default function App() {
  return (
    <Workspace>
      <GlobalStyle />
      <ChatPanel>
        <Conversation>
          <SectionTitle><Target />关键设计决策</SectionTitle>
          <Bullets>
            <li><strong>期权即一等公民：</strong><Code>equity</Code> 页完整呈现期权池/授予/归属/估值，并贯穿员工端面板，呼应 PRD 最强差异化。</li>
            <li><strong>合规红线可视化：</strong>离职交接强制技术资产回收清单、竞业依"是否接触商业秘密"判定、AI 评估"仅排序不淘汰"均在界面体现。</li>
            <li><strong>AI 原生：</strong>工作台 AI 输入框 + 全局 Copilot 弹窗 + 人在回路确认卡片，符合 M9「第二操作层」定位。</li>
            <li><strong>人才密度视角：</strong>洞察页围绕研发占比/资深占比/人均产出，而非人头数。</li>
          </Bullets>
          <SectionTitle><Pin />说明</SectionTitle>
          <Bullets>
            <li>本地实时预览服务运行于 <Code><CodeLink href="#preview">http://localhost:4056</CodeLink></Code>，可在内置浏览器查看（侧边栏点击可跳转各页）。</li>
            <li><Code>gemdesign page doc save</Code> 接口本次报平台内部错误，PRD 需求摘要未能关联到平台，但不影响 12 个页面本身（均已保存成功）。</li>
          </Bullets>
          <Paragraph>需要我调整某个页面的细节、补充 PRD 中未覆盖的模块（如绩效 OKR、移动端 H5「我的」），或导出可分享的页面链接吗？</Paragraph>
          <FileGrid>
            {files.map((f) => (
              <FileCard key={f}>
                <FileIcon /><FileName>{f}</FileName>
                <CardActions>
                  <IconButton aria-label="预览"><Globe /></IconButton>
                  <IconButton aria-label="打开"><OpenArrow /></IconButton>
                </CardActions>
              </FileCard>
            ))}
          </FileGrid>
          <LinkRow>
            <MoreButton>查看所有产物 (8)<Chevron /></MoreButton>
            <MoreButton>查看所有变更 (14)<Chevron /></MoreButton>
          </LinkRow>
          <FeedbackRow>
            <IconButton aria-label="复制"><Copy /></IconButton>
            <IconButton aria-label="赞"><ThumbUp /></IconButton>
            <IconButton aria-label="踩"><ThumbDown /></IconButton>
            <IconButton aria-label="朗读"><Speaker /></IconButton>
            <IconButton aria-label="更多"><Dots /></IconButton>
            <Cost>共消耗 <Line size={12} box={12}><path d="M6 1l5 5-5 5-5-5z" /></Line> 19.48</Cost>
          </FeedbackRow>
        </Conversation>
        <Composer>
          <Prompt aria-label="消息" placeholder="今天帮你做些什么？ @ 引用对话文件，/ 调用技能与指令" />
          <SendButton type="button" aria-label="发送" />
        </Composer>
        <ScrollRail>
          <svg width="6" height="5" viewBox="0 0 6 5" aria-hidden="true"><path d="M3 0l3 5H0z" fill="currentColor" /></svg>
          <ScrollThumb />
          <svg width="6" height="5" viewBox="0 0 6 5" aria-hidden="true"><path d="M0 0h6L3 5z" fill="currentColor" /></svg>
        </ScrollRail>
      </ChatPanel>

      <Browser>
        <AddressBar>
          <IconButton aria-label="后退"><Line w={1.1}><path d="M14.500 8h-13M7 2.500 1.500 8 7 13.500" /></Line></IconButton>
          <IconButton aria-label="前进" $tone="#5a5a5c"><Line w={1.1}><path d="M1.500 8h13M9 2.500 14.500 8 9 13.500" /></Line></IconButton>
          <AddressBox>
            <Globe />
            <AddressInput aria-label="地址" defaultValue="http://localhost:4056/#/" />
          </AddressBox>
        </AddressBar>
        <ProjectBar>
          <ProjectName>HRM人力资源管理...</ProjectName>
          <IconButton aria-label="切换项目" $tone="#aaa"><Line size={14} box={14} w={1.5}><path d="m2 4.500 5 5 5-5" /></Line></IconButton>
        </ProjectBar>
        <Designer>
          <PageList>
            <PageListHead>
              <span>页面</span>
              <IconButton aria-label="搜索" $tone="#333"><Line><circle cx="7.500" cy="8" r="5.500" /><path d="m11.500 12 2 2.200" /></Line></IconButton>
              <IconButton aria-label="文件夹" $tone="#333"><Line><path d="M1.500 14V2h4.500l1.500 2h7v10zM1.500 7.500h13" /></Line></IconButton>
            </PageListHead>
            {pages.map((p) => <PageLink key={p} href="#page"><PageIcon />{p}</PageLink>)}
          </PageList>
          <Canvas>
            <SharedPaints aria-hidden="true">
              <defs>
                <linearGradient id="brand" x1="0" y1="0" x2="1" y2="1"><stop offset="0" stopColor="#4f46e5" /><stop offset=".55" stopColor="#7c5cf6" /><stop offset="1" stopColor="#22a8e0" /></linearGradient>
                <linearGradient id="hero" x1="0" y1="0" x2="1" y2=".5"><stop offset="0" stopColor="#4f46e5" /><stop offset=".55" stopColor="#8b5cf6" /><stop offset="1" stopColor="#06b6d4" /></linearGradient>
              </defs>
            </SharedPaints>
            {boards.map(({ name, x, y, h, Page }) => (
              <Artboard key={name} $x={x} $y={y} $h={h}>
                <Page />
                <ArtboardTitle>密度 HR · {name}</ArtboardTitle>
              </Artboard>
            ))}
            <CollapseButton aria-label="收起页面列表"><Line size={12} box={12} w={1.2}><path d="M9.500 1 2.500 6l7 5" /></Line></CollapseButton>
          </Canvas>
        </Designer>
      </Browser>
    </Workspace>
  );
}
